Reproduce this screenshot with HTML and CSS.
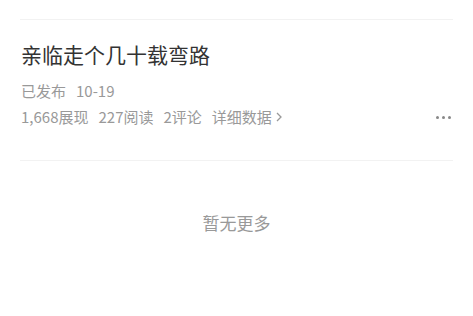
FILE: index.html
```html
<!DOCTYPE html>
<html lang="zh-CN">
<head>
    <meta charset="UTF-8">
    <title>文章列表</title>
    <link rel="stylesheet" href="styles.css">
</head>
<body>
    <div class="list">
        <div class="article">
            <h2 class="article-title">亲临走个几十载弯路</h2>
            <div class="article-date">已发布<span class="gap"></span>10-19</div>
            <div class="article-stats">
                <span>1,668展现</span>
                <span>227阅读</span>
                <span>2评论</span>
                <span class="detail">详细数据
                    <svg width="8" height="12" viewBox="0 0 8 12"><path d="M2 2l4 4-4 4" fill="none" stroke="#999" stroke-width="1.3"/></svg>
                </span>
                <span class="more">
                    <i></i><i></i><i></i>
                </span>
            </div>
        </div>
        <div class="empty">暂无更多</div>
    </div>
</body>
</html>
```

FILE: styles.css
```css
body, html {
    margin: 0;
    padding: 0;
    background-color: #fff;
    font-family: "Noto Sans CJK SC", "Noto Sans", sans-serif;
}
.list {
    padding: 19px 20px 0 20px;
}
.article {
    border-top: 1px solid #f2f2f2;
    border-bottom: 1px solid #f2f2f2;
    padding: 19px 0 32px 1px;
}
.article-title {
    margin: 0;
    font-size: 21px;
    font-weight: normal;
    color: #333;
    line-height: 30px;
}
.article-date {
    margin-top: 10px;
    font-size: 15px;
    color: #999;
    line-height: 24px;
}
.gap {
    display: inline-block;
    width: 10px;
}
.article-stats {
    margin-top: 3px;
    display: flex;
    align-items: center;
    gap: 10px;
    font-size: 15px;
    color: #999;
    line-height: 22px;
}
.detail {
    display: flex;
    align-items: center;
    gap: 3px;
}
.more {
    margin-left: auto;
    margin-right: 2px;
    display: flex;
    gap: 3px;
}
.more i {
    width: 3px;
    height: 3px;
    border-radius: 50%;
    background-color: #888;
}
.empty {
    margin-top: 42px;
    text-align: center;
    font-size: 17px;
    color: #999;
    line-height: 40px;
}
```
